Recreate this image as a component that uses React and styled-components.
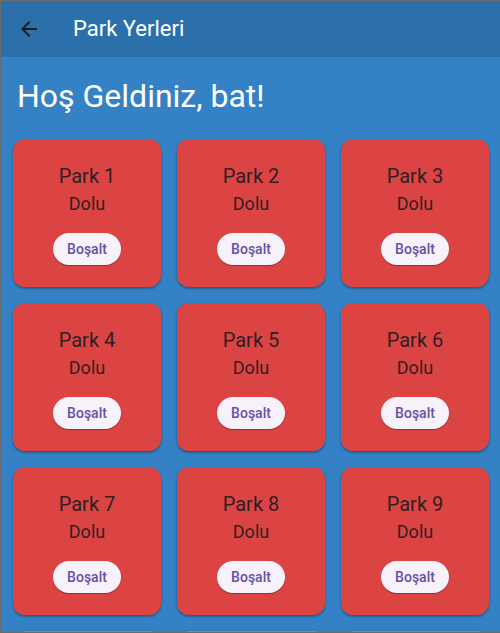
import React from "react";
import styled, { createGlobalStyle } from "styled-components";

const GlobalStyle = createGlobalStyle`
  *, *::before, *::after { box-sizing: border-box; }
  body { margin: 0; font-family: Roboto, "Noto Sans", sans-serif; }
`;

const Screen = styled.div`
  position: relative;
  display: flex;
  flex-direction: column;
  height: 100vh;
  overflow: hidden;
  border: 1px solid #6b6b6b;
  border-right: 0;
  background: #3482c5;
`;

const EdgeMark = styled.span`
  position: absolute;
  left: -1px;
  top: 290px;
  width: 1px;
  height: 5px;
  background: #25262a;
`;

const AppBar = styled.header`
  display: flex;
  flex: none;
  align-items: center;
  gap: 20px;
  height: 56px;
  padding: 0 4px;
  background: #2b70ab;
`;

const BackButton = styled.button`
  display: grid;
  place-items: center;
  width: 48px;
  height: 48px;
  padding: 0;
  border: 0;
  border-radius: 50%;
  background: transparent;
  color: #1d1b20;
  cursor: pointer;
`;

const Title = styled.h1`
  margin: 0;
  color: #fff;
  font-size: 22px;
  font-weight: 400;
  line-height: 28px;
`;

const Content = styled.main`
  flex: 1;
  min-height: 0;
  overflow: hidden;
`;

const Greeting = styled.h2`
  margin: 0;
  padding: 20px 16px 24px;
  color: #fff;
  font-size: 32px;
  font-weight: 400;
  line-height: 38px;
`;

const SpotGrid = styled.div`
  display: grid;
  grid-template-columns: repeat(3, 1fr);
  gap: 16px;
  padding: 0 11px 12px 12px;
`;

const SpotCard = styled.section`
  display: flex;
  flex-direction: column;
  align-items: center;
  justify-content: center;
  aspect-ratio: 1;
  border-radius: 12px;
  background: ${({ $free }) => ($free ? "#4caf50" : "#dc4443")};
  box-shadow: 0 1px 3px rgba(0, 0, 0, 0.25), 0 2px 2px rgba(0, 0, 0, 0.15);
`;

const SpotName = styled.h3`
  margin: 0;
  color: #301f23;
  font-size: 20px;
  font-weight: 400;
  line-height: 30px;
`;

const SpotStatus = styled.p`
  margin: 0 0 16px;
  color: #301f23;
  font-size: 18px;
  line-height: 26px;
`;

const ReleaseButton = styled.button`
  height: 32px;
  padding: 0 14px;
  border: 0;
  border-radius: 16px;
  background: #f7f2fa;
  box-shadow: 0 1px 1px rgba(0, 0, 0, 0.3);
  color: #6750a4;
  font-family: inherit;
  font-size: 14px;
  font-weight: 500;
  line-height: 20px;
  cursor: pointer;
`;

const occupied = [1, 2, 3, 4, 5, 6, 7, 8, 9];
const free = [10, 11, 12];

export default function App() {
  return (
    <>
      <GlobalStyle />
      <Screen>
        <EdgeMark />
        <AppBar>
          <BackButton type="button" aria-label="Geri">
            <svg width="24" height="24" viewBox="0 0 24 24" fill="currentColor" aria-hidden="true">
              <path d="M20 11H7.83l5.59-5.59L12 4l-8 8 8 8 1.41-1.41L7.83 13H20v-2z" />
            </svg>
          </BackButton>
          <Title>Park Yerleri</Title>
        </AppBar>
        <Content>
          <Greeting>Hoş Geldiniz, bat!</Greeting>
          <SpotGrid>
            {occupied.map((n) => (
              <SpotCard key={n}>
                <SpotName>Park {n}</SpotName>
                <SpotStatus>Dolu</SpotStatus>
                <ReleaseButton type="button">Boşalt</ReleaseButton>
              </SpotCard>
            ))}
            {free.map((n) => (
              <SpotCard key={n} $free />
            ))}
          </SpotGrid>
        </Content>
      </Screen>
    </>
  );
}
